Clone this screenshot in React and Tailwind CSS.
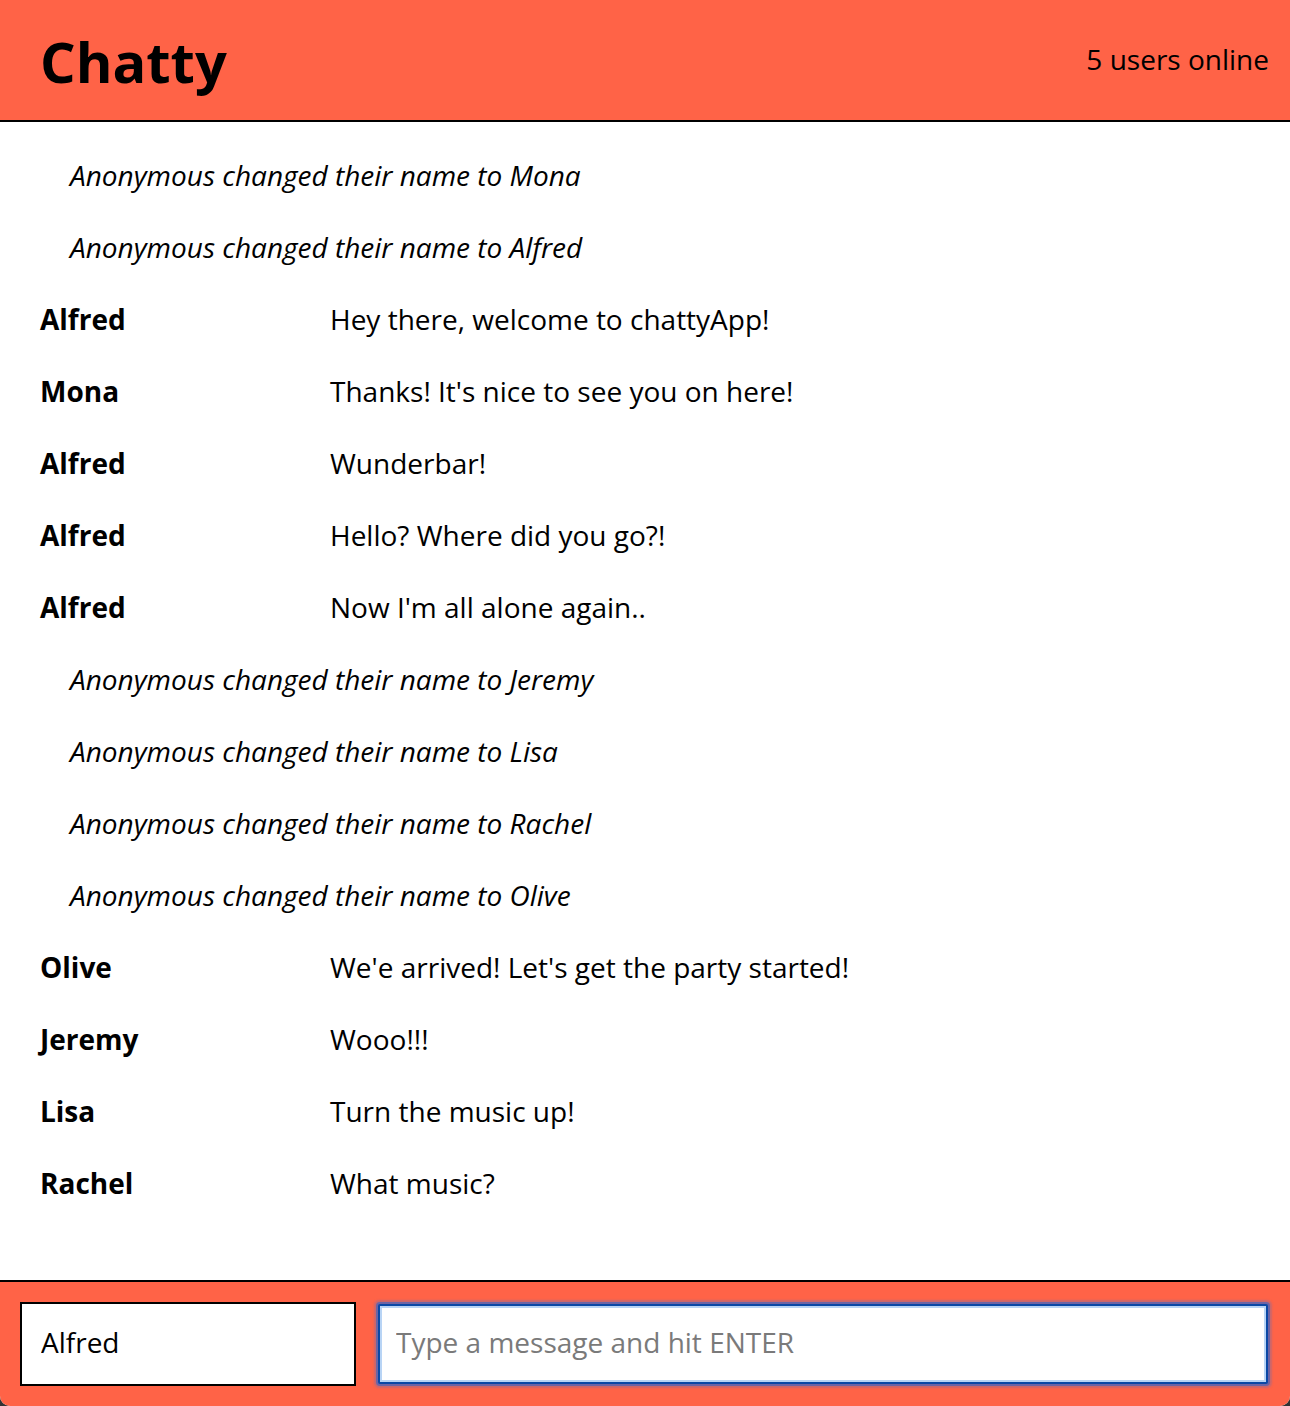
import React from "react";

const messages = [
  { type: "sys", text: "Anonymous changed their name to Mona" },
  { type: "sys", text: "Anonymous changed their name to Alfred" },
  { type: "msg", user: "Alfred", text: "Hey there, welcome to chattyApp!" },
  { type: "msg", user: "Mona", text: "Thanks! It's nice to see you on here!" },
  { type: "msg", user: "Alfred", text: "Wunderbar!" },
  { type: "msg", user: "Alfred", text: "Hello? Where did you go?!" },
  { type: "msg", user: "Alfred", text: "Now I'm all alone again.." },
  { type: "sys", text: "Anonymous changed their name to Jeremy" },
  { type: "sys", text: "Anonymous changed their name to Lisa" },
  { type: "sys", text: "Anonymous changed their name to Rachel" },
  { type: "sys", text: "Anonymous changed their name to Olive" },
  { type: "msg", user: "Olive", text: "We'e arrived! Let's get the party started!" },
  { type: "msg", user: "Jeremy", text: "Wooo!!!" },
  { type: "msg", user: "Lisa", text: "Turn the music up!" },
  { type: "msg", user: "Rachel", text: "What music?" },
];

export default function App() {
  return (
    <div className="bg-[#333] w-[1290px] h-[1406px] overflow-hidden" style={{ fontFamily: '"Open Sans", sans-serif' }}>
      <div className="flex flex-col h-full bg-white rounded-b-[10px] overflow-hidden text-black">
        <nav className="h-[122px] shrink-0 bg-[#ff6347] border-b-2 border-black flex items-center justify-between pl-[40px] pr-[21px]">
          <h1 className="text-[56px] font-bold leading-none mt-[2px]">Chatty</h1>
          <span className="text-[28px] leading-none mb-[3px]">5 users online</span>
        </nav>
        <main className="flex-1 pt-[17px] px-[40px]">
          {messages.map((m, i) =>
            m.type === "sys" ? (
              <div key={i} className="h-[72px] flex items-center pl-[30px] italic text-[28px] leading-none">
                {m.text}
              </div>
            ) : (
              <div key={i} className="h-[72px] flex items-center text-[28px] leading-none">
                <span className="w-[290px] shrink-0 font-bold">{m.user}</span>
                <span>{m.text}</span>
              </div>
            )
          )}
        </main>
        <footer className="h-[126px] shrink-0 bg-[#ff6347] border-t-2 border-black flex items-center gap-[20px] px-[20px]">
          <input
            className="w-[336px] h-[84px] border-2 border-black bg-white px-[19px] pb-[4px] text-[28px] outline-none"
            defaultValue="Alfred"
            style={{ fontFamily: '"Open Sans", sans-serif' }}
          />
          <input
            className="flex-1 h-[80px] mx-[2px] border-2 border-[#0a48a6] bg-white px-[16px] pb-[4px] text-[28px] outline-none rounded-[2px] shadow-[inset_0_0_0_2px_#b8d4f5,0_0_0_2px_rgba(70,100,190,0.7),0_0_2px_4px_rgba(100,110,180,0.35)] placeholder:text-[#7a7a7a]"
            placeholder="Type a message and hit ENTER"
            style={{ fontFamily: '"Open Sans", sans-serif' }}
          />
        </footer>
      </div>
    </div>
  );
}
